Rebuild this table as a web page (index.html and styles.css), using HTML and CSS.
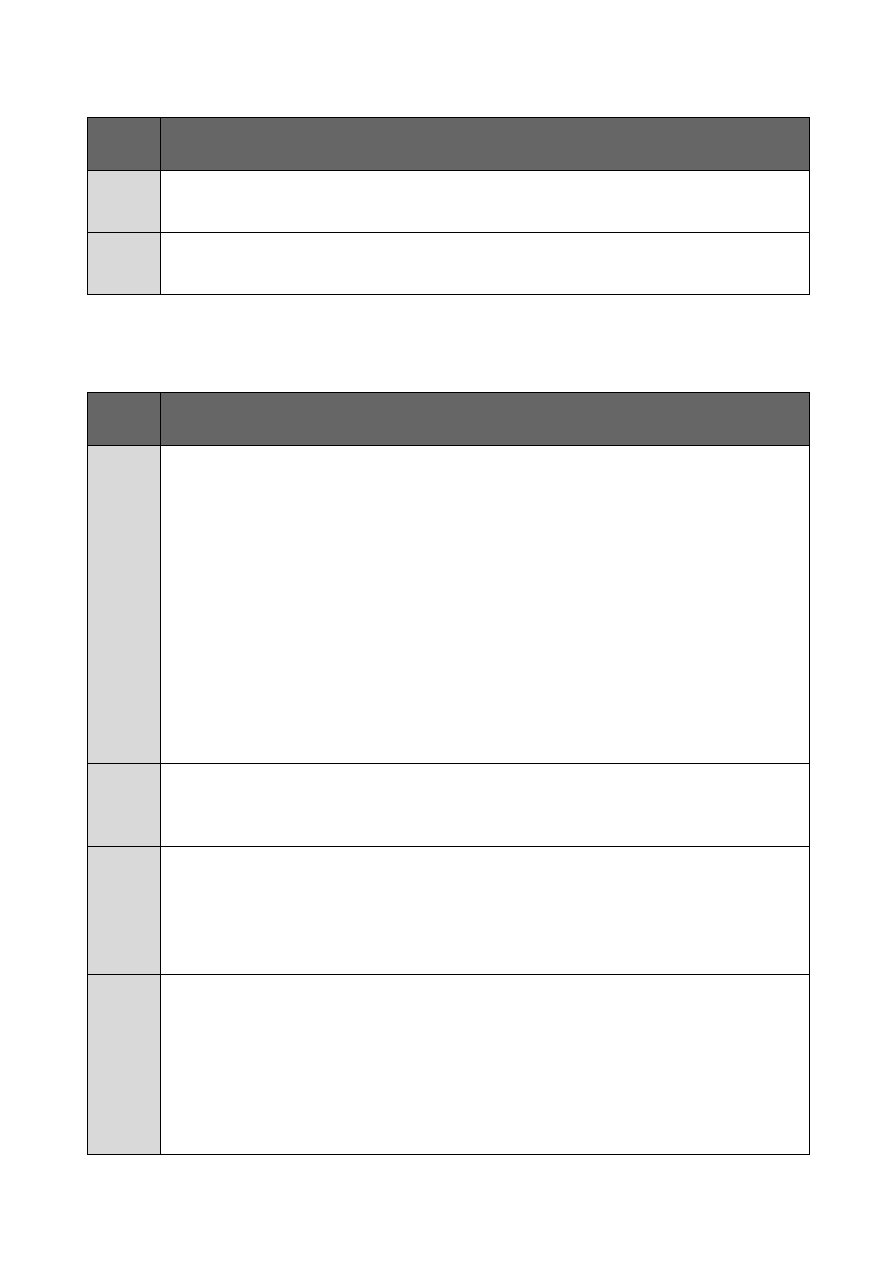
FILE: index.html
```html
<!DOCTYPE html>
<html lang="en">
<head>
<meta charset="utf-8">
<title>Tables</title>
<link rel="stylesheet" href="styles.css">
</head>
<body>
<main class="page">
  <table class="grid">
    <colgroup><col class="c-key"><col></colgroup>
    <tr class="head h53"><td></td><td></td></tr>
    <tr class="h62"><td class="key"></td><td></td></tr>
    <tr class="h62"><td class="key"></td><td></td></tr>
  </table>
  <table class="grid second">
    <colgroup><col class="c-key"><col></colgroup>
    <tr class="head h53"><td></td><td></td></tr>
    <tr class="h318"><td class="key"></td><td></td></tr>
    <tr class="h83"><td class="key"></td><td></td></tr>
    <tr class="h128"><td class="key"></td><td></td></tr>
    <tr class="h180"><td class="key"></td><td></td></tr>
  </table>
</main>
</body>
</html>
```
FILE: styles.css
```css
html, body {
  margin: 0;
  padding: 0;
  background: #ffffff;
  font-family: "Liberation Sans", Arial, sans-serif;
}
.page {
  padding: 117px 0 0 87px;
}
.grid {
  border-collapse: collapse;
  table-layout: fixed;
  width: 723px;
}
.grid td {
  border: 1px solid #000000;
  padding: 0;
  background: #ffffff;
}
.c-key { width: 73px; }
.grid .key { background: #d9d9d9; }
.grid .head td { background: #666666; }
.second { margin-top: 97px; }
.h53 td { height: 52px; }
.h62 td { height: 61px; }
.h318 td { height: 317px; }
.h83 td { height: 82px; }
.h128 td { height: 127px; }
.h180 td { height: 179px; }
```
